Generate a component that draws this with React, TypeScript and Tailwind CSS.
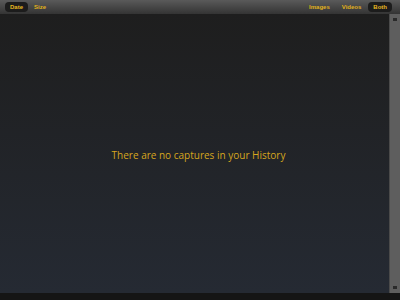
import React from 'react';

const Tab = ({ label, active = false }: { label: string; active?: boolean }) => (
	<button
		className={
			active
				? 'h-[10px] px-[5px] rounded-[4px] bg-[#1c1c1c] text-[#e8b820] text-[6px] font-bold leading-[10px]'
				: 'h-[10px] px-[5px] text-[#e0b01c] text-[6px] font-bold leading-[10px]'
		}
	>
		{label}
	</button>
);

export default function App() {
	return (
		<div className="w-[400px] h-[300px] flex flex-col bg-[#141414] overflow-hidden" style={{ fontFamily: '"Liberation Sans", sans-serif' }}>
			<div className="h-[14px] shrink-0 flex items-center justify-between px-[5px] bg-gradient-to-b from-[#5a5a5a] to-[#343434]">
				<div className="flex items-center gap-[1px]">
					<Tab label="Date" active />
					<Tab label="Size" />
				</div>
				<div className="flex items-center gap-[2px] pr-[3px]">
					<Tab label="Images" />
					<Tab label="Videos" />
					<Tab label="Both" active />
				</div>
			</div>
			<div className="h-[279px] shrink-0 flex">
				<div className="flex-1 flex items-center justify-center pl-[8px] bg-gradient-to-b from-[#1e1e1e] to-[#252a33]">
					<p className="text-[10px] text-[#d6a61e] pt-[3px]" style={{ fontFamily: '"Open Sans", sans-serif' }}>
						There are no captures in your History
					</p>
				</div>
				<div className="w-[11px] flex flex-col items-center justify-between py-[2px] bg-[#5e5e5e] border-l border-[#4a4a4a]">
					<div className="w-[7px] h-[7px] flex items-center justify-center">
						<div className="w-[4px] h-[3px] bg-[#2a2a2a]" />
					</div>
					<div className="w-[7px] h-[7px] flex items-center justify-center">
						<div className="w-[4px] h-[3px] bg-[#2a2a2a]" />
					</div>
				</div>
			</div>
			<div className="flex-1 bg-[#151515]" />
		</div>
	);
}
